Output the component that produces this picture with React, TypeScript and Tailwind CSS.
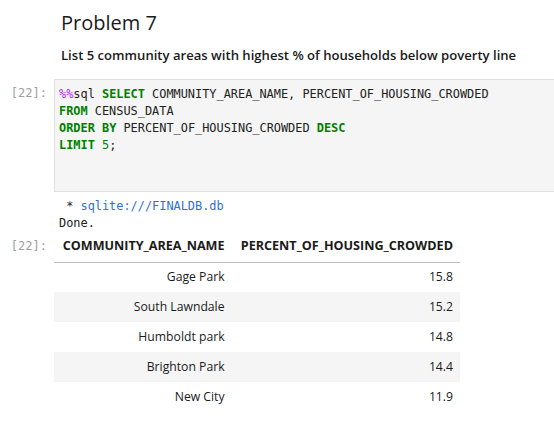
const rows = [
  { name: 'Gage Park', value: '15.8' },
  { name: 'South Lawndale', value: '15.2' },
  { name: 'Humboldt park', value: '14.8' },
  { name: 'Brighton Park', value: '14.4' },
  { name: 'New City', value: '11.9' },
];

const mono = "font-['DejaVu_Sans_Mono',monospace]";

const Prompt = ({ n }: { n: number }) => (
  <div className={`w-[54px] shrink-0 pr-[7px] text-right text-[12px] leading-[17px] text-[#9e9e9e] ${mono}`}>
    [{n}]:
  </div>
);

const App = () => {
  return (
    <div className="h-[428px] w-[554px] overflow-hidden bg-white font-['Open_Sans',sans-serif] text-[#1a1a1a]">
      {/* markdown cell */}
      <div className="pl-[61px] pt-[11px]">
        <h2 className="text-[20px] font-medium leading-[24px]">Problem 7</h2>
        <p className="mt-[10px] text-[13.1px] font-semibold leading-[20px]">
          List 5 community areas with highest % of households below poverty line
        </p>
      </div>

      {/* code cell */}
      <div className="mt-[14px] flex">
        <div className="pt-[6px]">
          <Prompt n={22} />
        </div>
        <div className="h-[113px] flex-1 border border-r-0 border-[#e0e0e0] bg-[#f5f5f5] pl-[4px] pt-[6px]">
          <pre className={`text-[11.9px] leading-[17px] text-[#212121] ${mono}`}>
            <span className="text-[#aa22ff]">%%</span>sql <span className="font-bold text-[#008000]">SELECT</span> COMMUNITY_AREA_NAME, PERCENT_OF_HOUSING_CROWDED{'\n'}
            <span className="font-bold text-[#008000]">FROM</span> CENSUS_DATA{'\n'}
            <span className="font-bold text-[#008000]">ORDER</span> <span className="font-bold text-[#008000]">BY</span> PERCENT_OF_HOUSING_CROWDED <span className="font-bold text-[#008000]">DESC</span>{'\n'}
            <span className="font-bold text-[#008000]">LIMIT</span> <span className="text-[#008000]">5</span>;
          </pre>
        </div>
      </div>

      {/* output */}
      <div className="flex pt-[6px]">
        <div className="w-[54px] shrink-0" />
        <pre className={`pl-[5px] text-[11.9px] leading-[17px] text-[#212121] ${mono}`}>
          {' * '}<span className="text-[#2f6fdc]">sqlite:///FINALDB.db</span>{'\n'}Done.
        </pre>
      </div>

      <div className="flex">
        <div className="pt-[6px]">
          <Prompt n={22} />
        </div>
        <table className="w-[406px] border-collapse text-[12.2px]">
          <thead>
            <tr className="h-[30px] border-b border-[#bdbdbd]">
              <th className="px-[7px] text-right text-[12.6px] font-bold">COMMUNITY_AREA_NAME</th>
              <th className="px-[7px] text-right text-[12.6px] font-bold">PERCENT_OF_HOUSING_CROWDED</th>
            </tr>
          </thead>
          <tbody>
            {rows.map((r, i) => (
              <tr key={r.name} className={`h-[30px] ${i % 2 === 1 ? 'bg-[#f5f5f5]' : ''}`}>
                <td className="px-[7px] text-right">{r.name}</td>
                <td className="px-[7px] text-right">{r.value}</td>
              </tr>
            ))}
          </tbody>
        </table>
      </div>
    </div>
  );
};

export default App;
